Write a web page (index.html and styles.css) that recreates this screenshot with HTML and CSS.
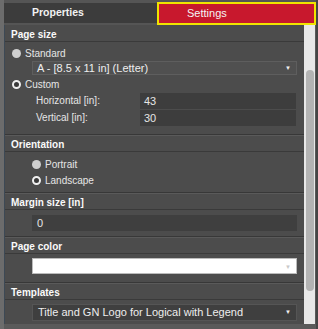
FILE: index.html
```html
<!DOCTYPE html>
<html lang="en">
<head>
    <meta charset="UTF-8">
    <meta name="viewport" content="width=device-width, initial-scale=1.0">
    <title>Settings</title>
    <link rel="stylesheet" href="styles.css">
</head>
<body>
    <div class="window">
        <!-- Tabs -->
        <div class="tabs">
            <div class="tab">Properties</div>
            <div class="tab active">Settings</div>
        </div>

        <div class="body">
            <div class="panel">
                <!-- Page size -->
                <div class="section first">
                    <div class="section-title">Page size</div>
                    <div class="radio-row"><span class="radio"></span>Standard</div>
                    <div class="select">A - [8.5 x 11 in] (Letter)<span class="arrow">&#9660;</span></div>
                    <div class="radio-row custom"><span class="radio checked"></span>Custom</div>
                    <div class="field-row"><span class="field-label">Horizontal [in]:</span><span class="field-input">43</span></div>
                    <div class="field-row"><span class="field-label">Vertical [in]:</span><span class="field-input">30</span></div>
                </div>

                <!-- Orientation -->
                <div class="section orientation">
                    <div class="section-title">Orientation</div>
                    <div class="radio-row indent"><span class="radio"></span>Portrait</div>
                    <div class="radio-row indent"><span class="radio checked"></span>Landscape</div>
                </div>

                <!-- Margin -->
                <div class="section">
                    <div class="section-title">Margin size [in]</div>
                    <div class="wide-input">0</div>
                </div>

                <!-- Page color -->
                <div class="section">
                    <div class="section-title">Page color</div>
                    <div class="color-input"><span class="arrow">&#9660;</span></div>
                </div>

                <!-- Templates -->
                <div class="section">
                    <div class="section-title">Templates</div>
                    <div class="select tall">Title and GN Logo for Logical with Legend<span class="arrow">&#9660;</span></div>
                </div>
            </div>
            <div class="scrollbar"><div class="thumb"></div></div>
        </div>
    </div>
</body>
</html>
```

FILE: styles.css
```css
/* Settings panel */
body {
    margin: 0;
    padding: 0;
    background-color: #585858;
    font-family: "Liberation Sans", Arial, sans-serif;
    color: #e6e6e6;
}

.window {
    width: 318px;
    height: 329px;
    box-sizing: border-box;
    background-color: #5a5a5a;
    border-left: 4px solid #6c6c6c;
    border-right: 2px solid #454545;
    overflow: hidden;
}

.tabs {
    display: flex;
    height: 25px;
    background-color: #555;
}

.tab {
    width: 153px;
    margin-top: 3px;
    height: 20px;
    line-height: 19px;
    padding-left: 28px;
    box-sizing: border-box;
    background-color: #3c3c3c;
    font-size: 10.5px;
    font-weight: bold;
    color: #f2f2f2;
}

.tab.active {
    flex: 1;
    margin-top: 2px;
    height: 23px;
    line-height: 18px;
    background-color: #c8182d;
    border: 2px solid #f0e400;
    font-size: 11px;
    font-weight: normal;
    color: #f4f4f4;
}

.body {
    display: flex;
    height: 299px;
}

.panel {
    width: 300px;
    border-left: 1px solid #3d4955;
    background-color: #4c4c4c;
    box-sizing: border-box;
}

.scrollbar {
    width: 11px;
    background-color: #e8e8e8;
    padding: 45px 1px 0 2px;
    box-sizing: border-box;
}

.thumb {
    height: 221px;
    background-color: #b3b3b3;
    border-radius: 4px;
}

.section {
    border-top: 1px solid #383838;
    box-shadow: inset 0 1px 0 #5a5a5a;
    padding: 4px 0 5px;
}

.section.first {
    border-top: none;
    box-shadow: none;
    padding: 4px 0 8px;
}

.section.orientation {
    padding-bottom: 4px;
}

.section-title {
    height: 12px;
    line-height: 12px;
    padding-left: 6px;
    font-size: 10px;
    font-weight: bold;
    color: #fafafa;
    border-bottom: 1px solid #3a3a3a;
    margin-bottom: 4px;
}

.radio-row {
    display: flex;
    align-items: center;
    height: 15px;
    font-size: 10px;
    padding-left: 7px;
}

.radio-row.custom {
    margin-top: 2px;
}

.radio-row.indent {
    height: 16px;
    padding-left: 27px;
}

.radio-row.indent:first-of-type {
    margin-top: 3px;
}

.radio {
    width: 9px;
    height: 9px;
    border-radius: 50%;
    background-color: #cfcfcf;
    margin-right: 4px;
    box-sizing: border-box;
}

.radio.checked {
    background-color: #3a3a3a;
    border: 2.5px solid #f0f0f0;
}

.select {
    position: relative;
    margin-left: 27px;
    width: 265px;
    height: 14px;
    line-height: 13px;
    box-sizing: border-box;
    padding-left: 4px;
    background-color: #505050;
    border: 1px solid #5e5e5e;
    font-size: 11px;
    color: #eee;
}

.select.tall {
    height: 17px;
    line-height: 15px;
    margin-top: 4px;
    padding-left: 5px;
    background-color: #3f3f3f;
    border-color: #555;
}

.arrow {
    position: absolute;
    right: 5px;
    top: 0;
    font-size: 6px;
    color: #f0f0f0;
}

.field-row {
    display: flex;
    height: 17px;
    margin-left: 31px;
    font-size: 10px;
    align-items: center;
}

.field-label {
    width: 104px;
}

.field-input {
    width: 156px;
    height: 16px;
    line-height: 16px;
    padding-left: 4px;
    box-sizing: border-box;
    background-color: #3d3d3d;
    font-size: 11px;
    margin-top: 1px;
}

.wide-input {
    margin: 5px 0 0 27px;
    width: 265px;
    height: 16px;
    line-height: 16px;
    padding-left: 5px;
    box-sizing: border-box;
    background-color: #3f3f3f;
    font-size: 11px;
}

.color-input {
    position: relative;
    margin: 4px 0 3px 27px;
    width: 265px;
    height: 16px;
    line-height: 16px;
    box-sizing: border-box;
    background-color: #ffffff;
    border: 1px solid #bbb;
}

.color-input .arrow {
    color: #c8c8c8;
}
```
